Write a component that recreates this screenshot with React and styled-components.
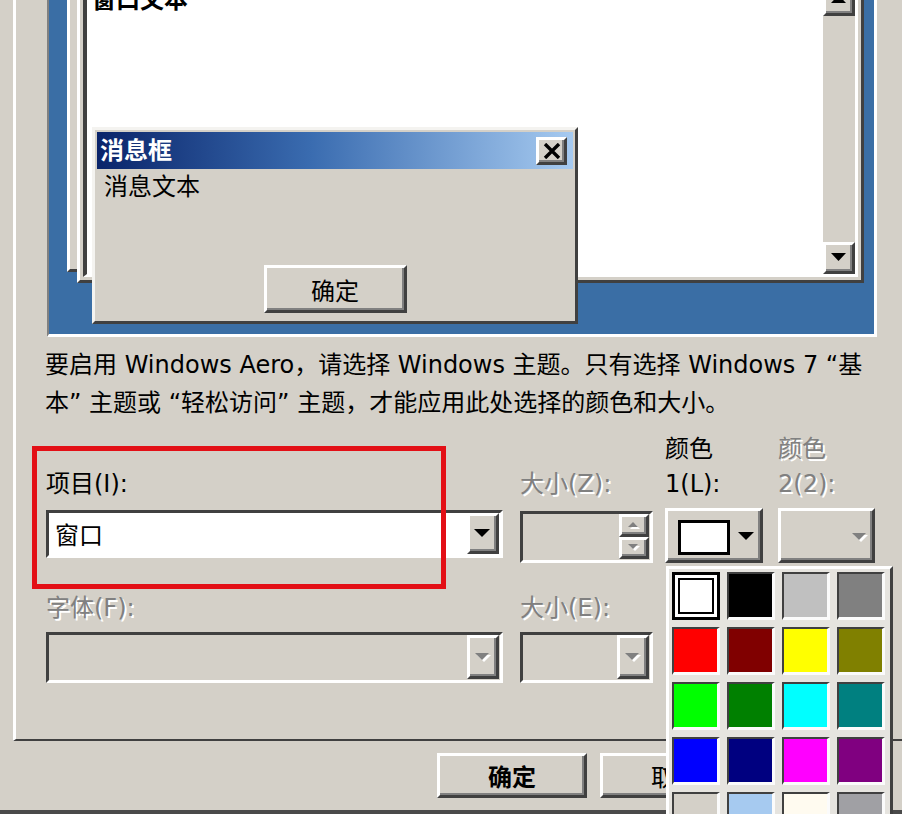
import React from 'react';
import styled, { createGlobalStyle, css } from 'styled-components';

const FACE = '#d4d0c8';
const SHADOW = '#808080';
const DARK = '#404040';
const DESK = '#3a6ea5';
const FONT = `"DejaVu Sans", "Noto Sans CJK SC", sans-serif`;

const Global = createGlobalStyle`
  html, body { margin: 0; padding: 0; background: ${FACE}; }
  body { font-family: ${FONT}; overflow: hidden; }
`;

const raised = css`
  box-sizing: border-box;
  border-style: solid;
  border-width: 3px;
  border-color: #fff ${DARK} ${DARK} #fff;
  box-shadow: inset -2px -2px 0 ${SHADOW};
  background: ${FACE};
`;

const sunken = css`
  box-sizing: border-box;
  border-style: solid;
  border-width: 3px;
  border-color: ${DARK} #fff #fff ${DARK};
`;

const disabledText = css`
  color: ${SHADOW};
  text-shadow: 2px 2px 0 #fff;
`;

const Screen = styled.div`
  width: 902px;
  height: 814px;
  overflow: hidden;
  position: relative;
  background: ${FACE};
  font-family: ${FONT};
  color: #000;
  display: flex;
  flex-direction: column;
`;

const TabPage = styled.div`
  flex: none;
  box-sizing: border-box;
  width: 940px;
  height: 741px;
  margin-left: 13px;
  padding-left: 31px;
  border-left: 3px solid #fff;
  border-bottom: 2px solid ${DARK};
  display: flex;
  flex-direction: column;
`;

/* ---------- preview (desktop with sample windows) ---------- */
const Preview = styled.div`
  flex: none;
  position: relative;
  box-sizing: border-box;
  margin-top: -40px;
  width: 830px;
  height: 377px;
  border-style: solid;
  border-width: 2px 3px 3px 2px;
  border-color: ${SHADOW} #fff #fff ${SHADOW};
  background: ${DESK};
  overflow: hidden;
`;

const SampleWindow = styled.div`
  position: absolute;
  left: ${p => p.$x}px;
  top: ${p => p.$y}px;
  width: ${p => p.$w}px;
  height: ${p => p.$h}px;
  box-sizing: border-box;
  border-style: solid;
  border-width: 3px;
  border-color: #fff ${DARK} ${DARK} #fff;
  background: ${FACE};
  padding: 3px;
  display: flex;
  flex-direction: column;
`;

const Client = styled.div`
  flex: 1;
  box-sizing: border-box;
  border-style: solid;
  border-width: 4px 3px 3px 4px;
  border-color: ${DARK} #fff #fff ${DARK};
  background: #fff;
  display: flex;
`;

const ClientText = styled.div`
  flex: 1;
  padding: 0 5px;
  font-size: 24px;
  line-height: 32px;
  font-weight: bold;
`;

const ScrollBar = styled.div`
  width: 32px;
  background: ${FACE};
  display: flex;
  flex-direction: column;
  justify-content: space-between;
`;

const ScrollBtn = styled.div`
  ${raised};
  width: 32px;
  height: 32px;
  display: flex;
  align-items: center;
  justify-content: center;
`;

const MsgBox = styled.div`
  position: absolute;
  left: 43px;
  top: 165px;
  width: 486px;
  height: 197px;
  box-sizing: border-box;
  border-style: solid;
  border-width: 3px;
  border-color: #f4f3f0 ${DARK} ${DARK} #f4f3f0;
  background: ${FACE};
  padding: 2px;
  display: flex;
  flex-direction: column;
`;

const TitleBar = styled.div`
  height: 37px;
  flex: none;
  background: linear-gradient(to right, #0a246a 0%, #3a6cb0 45%, #a6caf0 100%);
  display: flex;
  align-items: center;
  justify-content: space-between;
  padding: 0 6px 0 3px;
`;

const Title = styled.span`
  color: #fff;
  font-weight: bold;
  font-size: 24px;
  line-height: 32px;
`;

const CloseBtn = styled.div`
  ${raised};
  width: 31px;
  height: 28px;
  display: flex;
  align-items: center;
  justify-content: center;
`;

const MsgText = styled.div`
  padding: 0 7px;
  font-size: 24px;
  line-height: 32px;
  margin-top: 2px;
`;

const MsgButtons = styled.div`
  margin-top: auto;
  padding-bottom: 6px;
  display: flex;
  justify-content: center;
`;

const PushButton = styled.div`
  ${raised};
  width: ${p => p.$w}px;
  height: ${p => p.$h}px;
  display: flex;
  align-items: center;
  justify-content: center;
  font-size: 24px;
  font-weight: ${p => (p.$bold ? 'bold' : 'normal')};
`;

/* ---------- explanation text ---------- */
const Note = styled.div`
  margin: 9px 0 0 -2px;
  font-size: 24px;
  line-height: 38px;
`;

const NoteLine = styled.div`
  white-space: nowrap;
`;

/* ---------- form ---------- */
const Form = styled.div`
  position: relative;
  margin: 10px 0 0 -1px;
  display: grid;
  grid-template-columns: 474px 145px 113px 97px;
  grid-template-rows: 70px 55px 57px 51px;
  row-gap: 6px;
`;

const Label = styled.div`
  align-self: end;
  font-size: 24px;
  line-height: 35px;
  white-space: nowrap;
  ${p => p.$disabled && disabledText};
`;

const Combo = styled.div`
  ${sunken};
  align-self: start;
  margin-top: ${p => p.$mt || 0}px;
  width: ${p => p.$w}px;
  height: ${p => p.$h}px;
  background: ${p => (p.$disabled ? FACE : '#fff')};
  display: flex;
  align-items: stretch;
  padding: 0 1px 1px 0;
`;

const ComboText = styled.div`
  flex: 1;
  display: flex;
  align-items: center;
  padding-left: 6px;
  font-size: 24px;
`;

const DropBtn = styled.div`
  ${raised};
  width: 32px;
  display: flex;
  align-items: center;
  justify-content: center;
`;

const SpinCol = styled.div`
  width: 30px;
  display: flex;
  flex-direction: column;
`;

const SpinBtn = styled.div`
  ${raised};
  flex: 1;
  display: flex;
  align-items: center;
  justify-content: center;
`;

const ColorBtn = styled.div`
  ${raised};
  align-self: start;
  width: ${p => p.$w}px;
  height: 55px;
  display: flex;
  align-items: center;
  padding: 3px 4px 0 10px;
`;

const Swatch = styled.div`
  width: 52px;
  height: 35px;
  box-sizing: border-box;
  border: 3px solid #000;
  background: ${p => p.$c};
`;

const ArrowSlot = styled.div`
  margin-left: auto;
  display: flex;
`;

const Highlight = styled.div`
  position: absolute;
  left: -14px;
  top: 14px;
  width: 414px;
  height: 143px;
  box-sizing: border-box;
  border: 5px solid #e30f16;
  pointer-events: none;
  z-index: 4;
`;

const Palette = styled.div`
  position: absolute;
  left: 620px;
  top: 134px;
  width: 227px;
  height: 300px;
  box-sizing: border-box;
  border-style: solid;
  border-width: 3px;
  border-color: #fff ${DARK} ${DARK} #fff;
  background: #e6e4df;
  padding: 3px 5px 3px 3px;
  display: grid;
  grid-template-columns: repeat(4, 48px);
  grid-auto-rows: 48px;
  gap: 7px;
  z-index: 5;
`;

const Cell = styled.div`
  box-sizing: border-box;
  border-style: solid;
  border-width: 2px 3px 3px 2px;
  border-color: ${DARK} #fbfbfb #fbfbfb ${DARK};
  background: ${p => p.$c};
  ${p =>
    p.$selected &&
    css`
      border-width: 3px;
      border-color: #000;
      box-shadow: inset 0 0 0 3px #fff, inset 0 0 0 5px #000;
    `};
`;

/* ---------- dialog buttons ---------- */
const Footer = styled.div`
  flex: none;
  box-sizing: border-box;
  height: 73px;
  border-bottom: 4px solid #4a4a4a;
  display: flex;
  justify-content: flex-end;
  align-items: flex-start;
  gap: 13px;
  padding: 12px 152px 0 0;
`;

/* ---------- icons ---------- */
const Tri = ({ dir = 'down', w = 16, h = 8, disabled }) => (
  <svg width={w + 2} height={h + 2} viewBox={`0 0 ${w + 2} ${h + 2}`}>
    {disabled && (
      <polygon
        points={dir === 'down' ? `2,2 ${w + 2},2 ${w / 2 + 2},${h + 2}` : `2,${h + 2} ${w + 2},${h + 2} ${w / 2 + 2},2`}
        fill="#fff"
      />
    )}
    <polygon
      points={dir === 'down' ? `0,0 ${w},0 ${w / 2},${h}` : `0,${h} ${w},${h} ${w / 2},0`}
      fill={disabled ? SHADOW : '#000'}
    />
  </svg>
);

const CloseIcon = () => (
  <svg width="18" height="16" viewBox="0 0 18 16">
    <path d="M2 1 L16 15 M16 1 L2 15" stroke="#000" strokeWidth="3.4" />
  </svg>
);

const PALETTE = [
  '#ffffff', '#000000', '#c0c0c0', '#808080',
  '#ff0000', '#800000', '#ffff00', '#808000',
  '#00ff00', '#008000', '#00ffff', '#008080',
  '#0000ff', '#000080', '#ff00ff', '#800080',
  '#d4d0c8', '#a6caf0', '#fffbf0', '#a0a0a4',
];

export default function App() {
  return (
    <>
      <Global />
      <Screen>
        <TabPage>
          <Preview>
            <SampleWindow $x={18} $y={0} $w={700} $h={310} />
            <SampleWindow $x={28} $y={12} $w={787} $h={309}>
              <Client>
                <ClientText>窗口文本</ClientText>
                <ScrollBar>
                  <ScrollBtn>
                    <Tri dir="up" w={15} h={8} />
                  </ScrollBtn>
                  <ScrollBtn>
                    <Tri dir="down" w={15} h={8} />
                  </ScrollBtn>
                </ScrollBar>
              </Client>
            </SampleWindow>
            <MsgBox>
              <TitleBar>
                <Title>消息框</Title>
                <CloseBtn>
                  <CloseIcon />
                </CloseBtn>
              </TitleBar>
              <MsgText>消息文本</MsgText>
              <MsgButtons>
                <PushButton $w={143} $h={48}>确定</PushButton>
              </MsgButtons>
            </MsgBox>
          </Preview>

          <Note>
            <NoteLine>要启用 Windows Aero，请选择 Windows 主题。只有选择 Windows 7 “基</NoteLine>
            <NoteLine>本” 主题或 “轻松访问” 主题，才能应用此处选择的颜色和大小。</NoteLine>
          </Note>

          <Form>
            <Label>项目(I):</Label>
            <Label $disabled>大小(Z):</Label>
            <Label>
              颜色
              <br />
              1(L):
            </Label>
            <Label $disabled>
              颜色
              <br />
              2(2):
            </Label>

            <Combo $w={457} $h={48} $mt={2}>
              <ComboText>窗口</ComboText>
              <DropBtn>
                <Tri />
              </DropBtn>
            </Combo>
            <Combo $w={133} $h={52} $mt={3} $disabled>
              <ComboText />
              <SpinCol>
                <SpinBtn>
                  <Tri dir="up" w={10} h={5} disabled />
                </SpinBtn>
                <SpinBtn>
                  <Tri dir="down" w={10} h={5} disabled />
                </SpinBtn>
              </SpinCol>
            </Combo>
            <ColorBtn $w={98}>
              <Swatch $c="#fff" />
              <ArrowSlot>
                <Tri />
              </ArrowSlot>
            </ColorBtn>
            <ColorBtn $w={97}>
              <ArrowSlot>
                <Tri disabled w={14} h={7} />
              </ArrowSlot>
            </ColorBtn>

            <Label $disabled>字体(F):</Label>
            <Label $disabled>大小(E):</Label>
            <div />
            <div />

            <Combo $w={457} $h={51} $disabled>
              <ComboText />
              <DropBtn>
                <Tri disabled w={14} h={7} />
              </DropBtn>
            </Combo>
            <Combo $w={133} $h={51} $disabled>
              <ComboText />
              <DropBtn>
                <Tri disabled w={14} h={7} />
              </DropBtn>
            </Combo>

            <Highlight />
            <Palette>
              {PALETTE.map((c, i) => (
                <Cell key={i} $c={c} $selected={i === 0} />
              ))}
            </Palette>
          </Form>
        </TabPage>

        <Footer>
          <PushButton $w={150} $h={45} $bold>确定</PushButton>
          <PushButton $w={150} $h={45}>取消</PushButton>
        </Footer>
      </Screen>
    </>
  );
}
